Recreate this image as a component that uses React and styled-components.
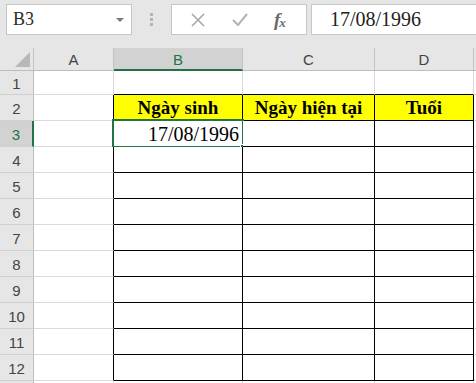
import styled, { createGlobalStyle } from "styled-components";

const GlobalStyle = createGlobalStyle`
  html, body {
    margin: 0;
    padding: 0;
    background: #ffffff;
  }
  body {
    width: 476px;
    height: 383px;
    overflow: hidden;
  }
`;

const GREEN = "#217346";
const GRID = "#dadada";
const INK = "#000000";

const Window = styled.div`
  width: 476px;
  height: 383px;
  overflow: hidden;
  display: flex;
  flex-direction: column;
  background: #ffffff;
`;

const FormulaBar = styled.div`
  display: flex;
  align-items: flex-start;
  height: 48px;
  flex-shrink: 0;
  box-sizing: border-box;
  padding: 4px 0 0 6px;
  background: #e6e6e6;
`;

const Box = styled.div`
  height: 31px;
  box-sizing: border-box;
  border: 1px solid #c6c6c6;
  background: #ffffff;
  display: flex;
  align-items: center;
`;

const NameBox = styled(Box)`
  width: 126px;
  justify-content: space-between;
  padding: 0 7px 0 6px;
  font: 18px "Liberation Serif", serif;
  color: #2b2b2b;
`;

const Caret = styled.span`
  width: 0;
  height: 0;
  border-left: 4px solid transparent;
  border-right: 4px solid transparent;
  border-top: 4px solid #7a7a7a;
`;

const Grip = styled.div`
  width: 39px;
  height: 31px;
  display: flex;
  flex-direction: column;
  align-items: center;
  justify-content: center;
  gap: 2px;
`;

const Dot = styled.span`
  width: 3px;
  height: 3px;
  background: #b4b4b4;
`;

const ActionBox = styled(Box)`
  width: 136px;
  justify-content: space-around;
  padding: 0 8px 0 6px;
`;

const Fx = styled.span`
  font: italic bold 19px "Liberation Serif", serif;
  color: #6a6a6a;
  letter-spacing: -1px;
  & sub {
    font-size: 13px;
    vertical-align: -1px;
  }
`;

const FormulaInput = styled(Box)`
  flex: 1;
  margin-left: 4px;
  border-right: none;
  padding-left: 18px;
  font: 20px "Liberation Serif", serif;
  color: #222;
`;

const Sheet = styled.div`
  display: grid;
  grid-template-columns: 34px 80px 129px 132px 99px 40px;
  grid-template-rows: 23px 24px repeat(12, 26px);
`;

const ColHead = styled.div`
  box-sizing: border-box;
  background: ${({ $active }) => ($active ? "#d2d2d2" : "#e6e6e6")};
  border-right: 1px solid #c3c3c3;
  border-bottom: ${({ $active }) =>
    $active ? `2px solid ${GREEN}` : "1px solid #bdbdbd"};
  color: ${({ $active }) => ($active ? GREEN : "#444")};
  font: 15px "Liberation Sans", sans-serif;
  display: flex;
  align-items: center;
  justify-content: center;
  padding-top: ${({ $active }) => ($active ? "1px" : "0")};
`;

const Corner = styled(ColHead)`
  position: relative;
  &::after {
    content: "";
    position: absolute;
    right: 3px;
    bottom: 3px;
    width: 0;
    height: 0;
    border-left: 15px solid transparent;
    border-bottom: 15px solid #b8b8b8;
  }
`;

const RowHead = styled.div`
  box-sizing: border-box;
  background: ${({ $active }) => ($active ? "#d2d2d2" : "#e6e6e6")};
  border-right: ${({ $active }) =>
    $active ? `2px solid ${GREEN}` : "1px solid #bdbdbd"};
  border-bottom: 1px solid #d0d0d0;
  color: ${({ $active }) => ($active ? GREEN : "#444")};
  font: 15px "Liberation Sans", sans-serif;
  display: flex;
  align-items: center;
  justify-content: center;
  padding-top: 2px;
`;

const Cell = styled.div`
  position: relative;
  box-sizing: border-box;
  background: ${({ $fill }) => $fill || "#ffffff"};
  border-right: 1px solid ${({ $right }) => $right || GRID};
  border-bottom: 1px solid ${({ $bottom }) => $bottom || GRID};
  font: ${({ $bold }) => ($bold ? "bold 19px" : "20px")} "Liberation Serif",
    serif;
  color: #000;
  display: flex;
  align-items: center;
  justify-content: ${({ $align }) => $align || "center"};
  padding: 1px 3px 0;
  white-space: nowrap;
`;

const Selection = styled.span`
  position: absolute;
  left: -2px;
  top: -2px;
  right: -2px;
  bottom: -2px;
  border: 2px solid ${GREEN};
  pointer-events: none;
`;

const Handle = styled.span`
  position: absolute;
  right: -5px;
  bottom: -5px;
  width: 5px;
  height: 5px;
  background: ${GREEN};
  border: 1px solid #ffffff;
`;

const columns = ["A", "B", "C", "D", "E"];
const headers = { B: "Ngày sinh", C: "Ngày hiện tại", D: "Tuổi" };
const inTable = (col) => col === "B" || col === "C" || col === "D";

const CrossIcon = () => (
  <svg width="14" height="14" viewBox="0 0 14 14">
    <path d="M1 1 L13 13 M13 1 L1 13" stroke="#a8a8a8" strokeWidth="1.6" fill="none" />
  </svg>
);

const CheckIcon = () => (
  <svg width="16" height="14" viewBox="0 0 16 14">
    <path d="M1 7 L6 12 L15 1" stroke="#b4b4b4" strokeWidth="2" fill="none" />
  </svg>
);

function renderCell(row, col) {
  const key = `${col}${row}`;
  const props = {};
  if (row >= 2 && row <= 12) {
    if (col === "A") props.$right = INK;
    if (inTable(col)) {
      props.$right = INK;
      props.$bottom = INK;
    }
  }
  if (row === 1 && inTable(col)) props.$bottom = INK;

  if (row === 2 && headers[col]) {
    return (
      <Cell key={key} {...props} $fill="#ffff00" $bold>
        {headers[col]}
      </Cell>
    );
  }
  if (row === 3 && col === "B") {
    return (
      <Cell key={key} {...props} $align="flex-end">
        17/08/1996
        <Selection>
          <Handle />
        </Selection>
      </Cell>
    );
  }
  return <Cell key={key} {...props} />;
}

export default function App() {
  const rows = Array.from({ length: 13 }, (_, i) => i + 1);
  return (
    <>
      <GlobalStyle />
      <Window>
        <FormulaBar>
          <NameBox>
            B3
            <Caret />
          </NameBox>
          <Grip>
            <Dot />
            <Dot />
            <Dot />
          </Grip>
          <ActionBox>
            <CrossIcon />
            <CheckIcon />
            <Fx>
              f<sub>x</sub>
            </Fx>
          </ActionBox>
          <FormulaInput>17/08/1996</FormulaInput>
        </FormulaBar>
        <Sheet>
          <Corner />
          {columns.map((c) => (
            <ColHead key={c} $active={c === "B"}>
              {c === "E" ? null : c}
            </ColHead>
          ))}
          {rows.map((r) => [
            <RowHead key={`h${r}`} $active={r === 3}>
              {r <= 12 ? r : null}
            </RowHead>,
            ...columns.map((c) => renderCell(r, c)),
          ])}
        </Sheet>
      </Window>
    </>
  );
}
